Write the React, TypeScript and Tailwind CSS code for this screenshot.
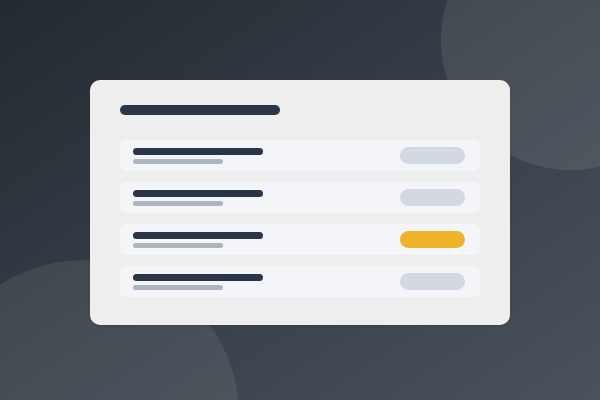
const ROWS = [false, false, true, false];

function Row({ active }: { active: boolean }) {
  return (
    <div className="flex h-[31px] items-center justify-between rounded-md bg-[#f3f5f8] pl-[13px] pr-[15px]">
      <div className="flex flex-col gap-[4px]">
        <div className="h-[7px] w-[130px] rounded-full bg-[#2a3547]" />
        <div className="h-[5px] w-[90px] rounded-full bg-[#aeb5be]" />
      </div>
      <div
        className={
          active
            ? 'h-[17px] w-[65px] rounded-full bg-[#f0b42a]'
            : 'h-[17px] w-[65px] rounded-full bg-[#d2d9e0]'
        }
      />
    </div>
  );
}

export default function App() {
  return (
    <div className="relative flex h-[400px] w-[600px] items-start justify-center overflow-hidden bg-gradient-to-br from-[#242a32] to-[#4a535d] pt-[80px]">
      {/* background blobs */}
      <div className="absolute left-[441px] top-[-90px] h-[260px] w-[260px] rounded-full bg-white/[0.09]" />
      <div className="absolute left-[-71px] top-[260px] h-[310px] w-[310px] rounded-full bg-white/[0.08]" />

      {/* card */}
      <div className="relative flex h-[245px] w-[420px] flex-col rounded-[10px] bg-[#f2f2f2]/[0.98] px-[30px] pt-[25px] shadow-sm">
        <div className="h-[10px] w-[160px] rounded-full bg-[#2a3547]" />
        <div className="mt-[25px] flex flex-col gap-[11px]">
          {ROWS.map((active, i) => (
            <Row key={i} active={active} />
          ))}
        </div>
      </div>
    </div>
  );
}
